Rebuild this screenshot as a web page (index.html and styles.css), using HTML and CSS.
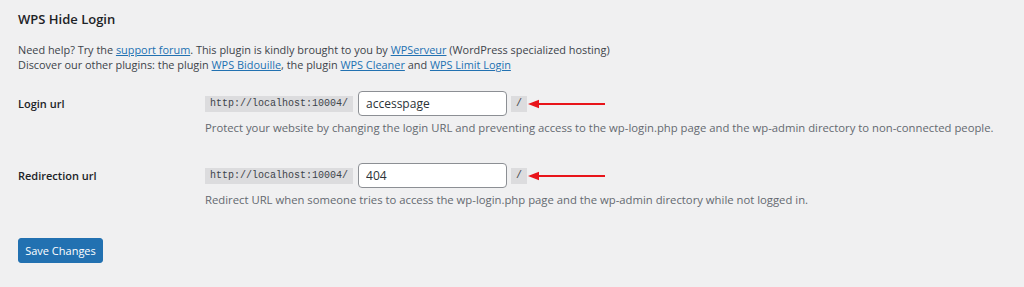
FILE: index.html
```html
<!DOCTYPE html>
<html lang="en">
<head>
  <meta charset="UTF-8">
  <title>WPS Hide Login</title>
  <link rel="stylesheet" href="styles.css">
</head>
<body>
  <div class="wrap">
    <h2 class="title">WPS Hide Login</h2>
    <p class="intro">
      Need help? Try the <a href="#">support forum</a>. This plugin is kindly brought to you by <a href="#">WPServeur</a> (WordPress specialized hosting)<br>
      Discover our other plugins: the plugin <a href="#">WPS Bidouille</a>, the plugin <a href="#">WPS Cleaner</a> and <a href="#">WPS Limit Login</a>
    </p>

    <form class="settings">
      <div class="field-row first">
        <label for="whl_page" class="field-label">Login url</label>
        <div class="field">
          <div class="url-line">
            <code class="prefix">http://localhost:10004/</code>
            <input type="text" id="whl_page" class="url-input" value="accesspage">
            <code class="slash">/</code>
            <svg class="arrow" width="78" height="10" viewBox="0 0 78 10">
              <path d="M8 5 H77" stroke="#e8141a" stroke-width="2.2"/>
              <path d="M0 5 L11 0.8 L11 9.2 Z" fill="#e8141a"/>
            </svg>
          </div>
          <p class="description">Protect your website by changing the login URL and preventing access to the wp-login.php page and the wp-admin directory to non-connected people.</p>
        </div>
      </div>

      <div class="field-row">
        <label for="whl_redirect" class="field-label">Redirection url</label>
        <div class="field">
          <div class="url-line">
            <code class="prefix">http://localhost:10004/</code>
            <input type="text" id="whl_redirect" class="url-input" value="404">
            <code class="slash">/</code>
            <svg class="arrow" width="78" height="10" viewBox="0 0 78 10">
              <path d="M8 5 H77" stroke="#e8141a" stroke-width="2.2"/>
              <path d="M0 5 L11 0.8 L11 9.2 Z" fill="#e8141a"/>
            </svg>
          </div>
          <p class="description">Redirect URL when someone tries to access the wp-login.php page and the wp-admin directory while not logged in.</p>
        </div>
      </div>

      <button type="button" class="button-primary">Save Changes</button>
    </form>
  </div>
</body>
</html>
```

FILE: styles.css
```css
body {
  margin: 0;
  background-color: #f0f0f1;
  color: #3c434a;
  font-family: "Open Sans", "Noto Sans", sans-serif;
  font-size: 10.9px;
}

.wrap {
  padding: 9px 18px 0 18px;
}

.title {
  margin: 0;
  font-size: 13px;
  line-height: 20px;
  font-weight: 600;
  color: #1d2327;
}

.intro {
  margin: 13px 0 0 0;
  line-height: 15px;
}

a {
  color: #2271b1;
  text-decoration: underline;
}

.field-row {
  display: grid;
  grid-template-columns: 187px 1fr;
  margin-top: 28px;
}

.field-row.first {
  margin-top: 19px;
}

.field-label {
  line-height: 25px;
  font-size: 11px;
  font-weight: 600;
  color: #1d2327;
}

.url-line {
  display: flex;
  align-items: center;
}

.prefix, .slash {
  font-family: "Liberation Mono", "DejaVu Sans Mono", monospace;
  font-size: 10px;
  line-height: 16px;
  background-color: #dcdcde;
  color: #3c434a;
  padding: 0 5px;
}

.url-input {
  width: 149px;
  height: 25px;
  box-sizing: border-box;
  margin: 0 4px 0 5px;
  padding: 0 7px;
  border: 1px solid #8c8f94;
  border-radius: 4px;
  background: #fff;
  font-family: inherit;
  font-size: 12px;
  color: #2c3338;
}

.slash {
  padding: 0 5px;
}

.arrow {
  margin-left: 1px;
}

.description {
  margin: 4px 0 0 0;
  font-size: 11.3px;
  line-height: 15px;
  color: #646970;
}

.button-primary {
  margin-top: 31px;
  height: 25px;
  width: 85px;
  padding: 0;
  border: 1px solid #2271b1;
  border-radius: 3px;
  background-color: #2271b1;
  color: #fff;
  font-family: inherit;
  font-size: 11px;
  cursor: pointer;
}
```
